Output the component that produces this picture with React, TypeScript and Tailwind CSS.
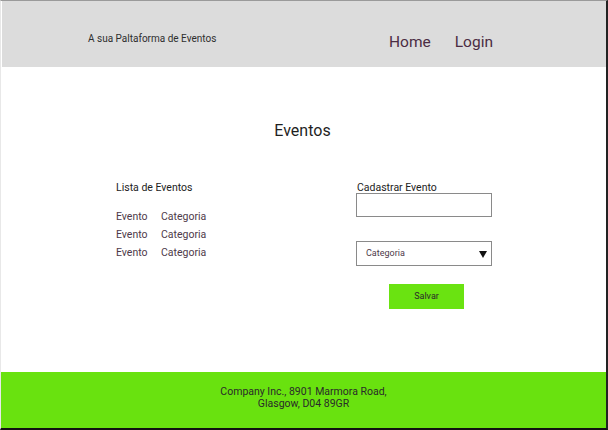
export default function App() {
  const eventos = [
    { nome: "Evento", categoria: "Categoria" },
    { nome: "Evento", categoria: "Categoria" },
    { nome: "Evento", categoria: "Categoria" },
  ];

  return (
    <div
      className="w-[608px] h-[430px] bg-white flex flex-col border-t border-l border-t-[#9a9a9a] border-l-[#e8e8e8] border-r-2 border-b-2 border-r-[#222] border-b-[#111]"
      style={{ fontFamily: "Roboto, 'Liberation Sans', sans-serif" }}
    >
      {/* Header */}
      <header className="h-[66px] bg-[#dcdcdc] flex items-start ml-px">
        <p className="mt-[31px] ml-[86px] text-[10px] leading-[13px] text-[#2e2e2e]">
          A sua Paltaforma de Eventos
        </p>
        <nav className="ml-auto mr-[113px] mt-[32px] flex gap-[24px] text-[15.5px] leading-[19px] text-[#4b2c43]">
          <a>Home</a>
          <a>Login</a>
        </nav>
      </header>

      {/* Main */}
      <main className="flex-1 flex flex-col">
        <h1 className="mt-[54px] text-center text-[16px] leading-[19px] text-[#1f1f1f] pr-[2px]">
          Eventos
        </h1>

        <div className="mt-[42px] flex">
          <section className="ml-[115px] w-[240px]">
            <h2 className="text-[10.5px] leading-[12px] text-[#222]">Lista de Eventos</h2>
            <ul className="mt-[16px] flex flex-col gap-[4.5px]">
              {eventos.map((e, i) => (
                <li key={i} className="flex text-[10.5px] leading-[13.5px] text-[#4e3a4a]">
                  <span className="w-[45px]">{e.nome}</span>
                  <span>{e.categoria}</span>
                </li>
              ))}
            </ul>
          </section>

          <section className="w-[136px] flex flex-col">
            <h2 className="text-[10.5px] leading-[12px] text-[#222] ml-[1px]">Cadastrar Evento</h2>
            <div className="-mt-[1px] h-[24px] border border-[#8a8a8a]" />
            <div className="mt-[24px] h-[25px] border border-[#8a8a8a] flex items-center pl-[9px] pr-[4px]">
              <span className="text-[9px] text-[#4e3a4a]">Categoria</span>
              <svg className="ml-auto mt-[2px]" width="8" height="7" viewBox="0 0 8 7">
                <polygon points="0,0 8,0 4,7" fill="#111" />
              </svg>
            </div>
            <button className="mt-[18px] ml-[33px] w-[75px] h-[25px] bg-[#6ae311] text-[9px] text-[#2a2a2a]">
              Salvar
            </button>
          </section>
        </div>
      </main>

      {/* Footer */}
      <footer className="h-[56px] bg-[#69e20f] flex flex-col items-center justify-center text-[10.5px] leading-[12px] text-[#2a2a2a] pb-[5px]">
        <p>Company Inc., 8901 Marmora Road,</p>
        <p>Glasgow, D04 89GR</p>
      </footer>
    </div>
  );
}
